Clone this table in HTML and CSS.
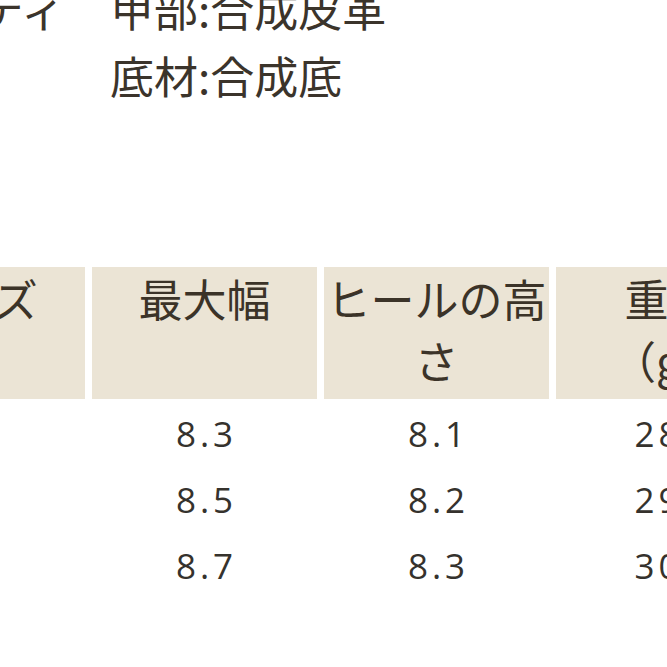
FILE: index.html
```html
<!DOCTYPE html>
<html lang="ja">
<head>
<meta charset="utf-8">
<link rel="stylesheet" href="styles.css">
</head>
<body>
<div class="page">
  <dl class="spec">
    <dt class="spec-label">クオリティ</dt>
    <dd class="spec-value">
      <div class="spec-line">甲部:合成皮革</div>
      <div class="spec-line">底材:合成底</div>
    </dd>
  </dl>
  <table class="size-table">
    <thead>
      <tr>
        <th>サイズ</th>
        <th>最大幅</th>
        <th>ヒールの高さ</th>
        <th>重量<br>（g）</th>
      </tr>
    </thead>
    <tbody>
      <tr><td>36</td><td>8.3</td><td>8.1</td><td>280</td></tr>
      <tr><td>37</td><td>8.5</td><td>8.2</td><td>290</td></tr>
      <tr><td>38</td><td>8.7</td><td>8.3</td><td>300</td></tr>
    </tbody>
  </table>
</div>
</body>
</html>
```
FILE: styles.css
```css
html, body {
  margin: 0;
  padding: 0;
  background: #ffffff;
}
body {
  width: 667px;
  height: 667px;
  overflow: hidden;
  font-family: "Noto Sans CJK JP", "Noto Sans", sans-serif;
  color: #3b342b;
}
.page {
  display: flex;
  flex-direction: column;
}
.spec {
  display: flex;
  margin: -25px 0 0 -200px;
  font-size: 44px;
  line-height: 67px;
}
.spec-label {
  width: 265px;
  text-align: right;
  flex: none;
  margin: 0;
  white-space: nowrap;
}
.spec-value {
  margin: 0 0 0 45px;
}
.spec-line {
  white-space: nowrap;
}
.size-table {
  margin: 158px 0 0 -147px;
  border-collapse: separate;
  border-spacing: 7px 0;
  table-layout: fixed;
  width: 935px;
}
.size-table th {
  width: 225px;
  box-sizing: border-box;
  background: #ebe4d5;
  font-weight: 400;
  font-size: 44px;
  line-height: 62px;
  padding: 0 2px 8px;
  height: 132px;
  vertical-align: top;
  text-align: center;
  color: #3b3328;
}
.size-table td {
  text-align: center;
  font-family: "Open Sans", "Noto Sans", sans-serif;
  font-size: 35px;
  line-height: 66px;
  letter-spacing: 4px;
  padding: 0 0 0 4px;
  color: #35322d;
}
.size-table tbody tr:first-child td {
  padding-top: 2px;
}
```
